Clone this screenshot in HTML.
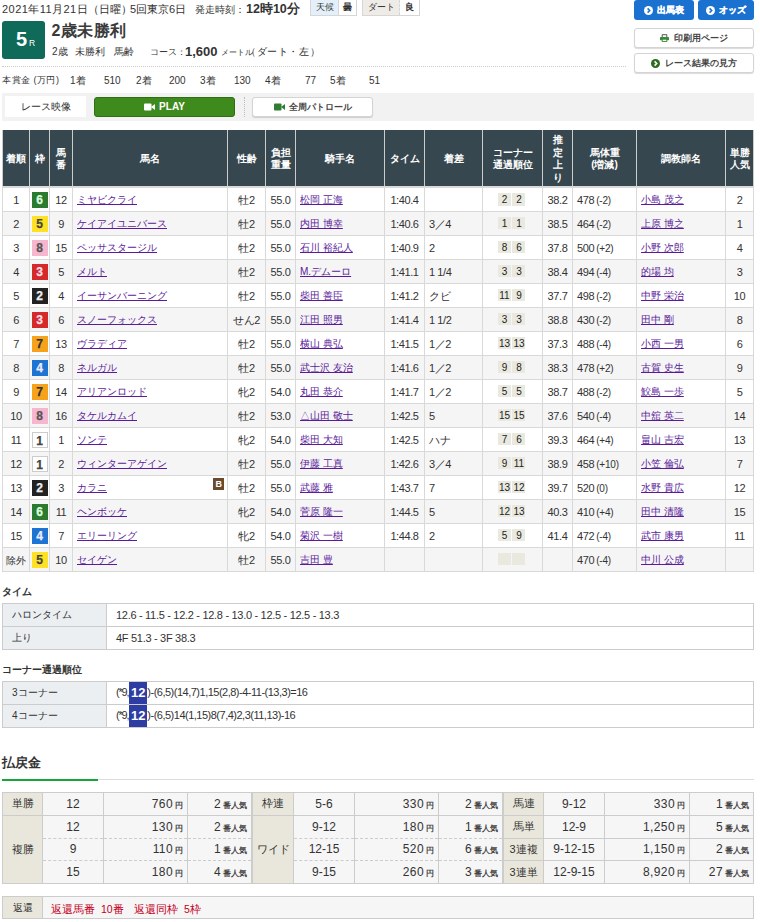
<!DOCTYPE html>
<html><head><meta charset="utf-8">
<style>
*{box-sizing:border-box;margin:0;padding:0}
html,body{width:760px;height:922px;overflow:hidden;background:#fff}
body{position:relative;font-family:"Liberation Sans",sans-serif;color:#333;font-size:11px;line-height:1}
.a{position:absolute;white-space:nowrap}
.b{font-weight:bold}
/* header */
.wx{position:absolute;top:0;height:16px;border:1px solid #d6d6d6;border-top:none;display:flex;font-size:9px}
.wx span{display:flex;align-items:center;justify-content:center;height:100%}
.rbox{position:absolute;left:2px;top:21px;width:43px;height:38px;background:#0f6a5a;border-radius:3px;color:#fff}
.btnb{position:absolute;top:0;height:20px;background:#1a71d0;border-radius:3px;color:#fff;font-weight:bold;font-size:9px;-webkit-text-stroke:0.3px #fff;display:flex;align-items:center;justify-content:center}
.btnw{position:absolute;left:634px;width:120px;height:20px;background:#fff;border:1px solid #d4d4d4;border-radius:3px;box-shadow:0 1px 1px rgba(0,0,0,.15);font-weight:bold;font-size:8.7px;display:flex;align-items:center;justify-content:center;color:#444}
.ic{display:inline-block;width:8px;height:8px;border-radius:50%;background:#fff;margin-right:4px;position:relative}
.ic:after{content:"";position:absolute;left:2px;top:2px;width:0;height:0;border-left:4px solid #1f78d1;border-top:2px solid transparent;border-bottom:2px solid transparent}
/* main table */
table{border-collapse:collapse;table-layout:fixed}
.rt{position:absolute;left:2px;top:130px;width:751px}
.rt th{background:#37474f;color:#fff;font-size:10px;font-weight:bold;height:57px;border:1px solid #ccc;border-top:none;border-bottom:2px solid #d9d9d9;line-height:1.25;padding-top:2px}
.rt td{height:24px;border:1px solid #d9d9d9;font-size:11px;text-align:center;padding-top:2px;letter-spacing:-0.4px}
.rt tr.e td{background:#f5f5f5}
.rt a{color:#5a1a9a;text-decoration:underline;font-size:10px;letter-spacing:0;position:relative;top:-0.5px}
.wk{display:inline-block;width:16px;height:16px;line-height:16px;font-weight:bold;font-size:12px;text-align:center;-webkit-text-stroke:0.25px currentColor;letter-spacing:0}
.cn{display:inline-block;width:13px;height:12.5px;line-height:13px;background:#eae9df;font-size:10px;color:#222;margin:0 0.75px;vertical-align:middle;letter-spacing:0;position:relative;left:-0.8px;top:-1px}
.rt td.nm,.rt td.jk,.rt td.tr,.rt td.df,.rt td.bw{text-align:left;padding-left:4px}
.rt td.nm{position:relative}
.bb{position:absolute;left:140px;top:2px;width:11px;height:12px;background:#6b4a2e;color:#fff;font-size:9px;font-weight:bold;line-height:12px;text-align:center}
.rt small{font-size:10px;margin-left:2px;letter-spacing:-0.2px}
.jx{font-size:10px}
.w1{background:#fff;border:1px solid #ccc;color:#444}
.w2{background:#222;color:#eee}
.w3{background:#d42a2a;color:#fde}
.w4{background:#1e74d2;color:#eef}
.w5{background:#fde124;color:#444}
.w6{background:#2b7a30;color:#dfd}
.w7{background:#f7a21b;color:#333}
.w8{background:#f6b6cd;color:#555}
.hd{font-size:10px}
.pr{top:76px;font-size:10px}
.st{position:absolute;left:2px;width:752px}
.st th{background:#eceff1;font-weight:normal;text-align:left;padding-left:9px;height:23px;border:1px solid #ccc;font-size:10px}
.st td{height:23px;border:1px solid #ccc;padding-left:9px;font-size:11px;letter-spacing:-0.3px}
.hl{display:inline-block;background:#2d3da3;color:#fff;font-weight:bold;font-size:13px;width:18px;height:22px;line-height:22px;text-align:center;vertical-align:middle;letter-spacing:0;margin-left:1px}
.pt{position:absolute;top:792px;width:250px}
.pt th{background:#e9e7dc;font-weight:normal;height:22.75px;border:1px solid #ccc;font-size:11px}
.pt td{background:#f6f6f6;height:22.75px;border:1px solid #ccc;font-size:12px}
.pt tr.d td{border-bottom:1px dashed #ccc}
.pt tr.n td{border-top:1px dashed #ccc}
.pt td.c{text-align:center}
.pt td.r{text-align:right;padding-right:4px;letter-spacing:0.4px}
.rf th{font-size:10px !important}
.rf th,.rf td{height:22px !important}
.pt u{text-decoration:none;font-size:8px;margin-left:2px;letter-spacing:0;font-weight:bold;color:#444}
</style></head><body>

<!-- header date -->
<div class="a" style="left:2px;top:4px;font-size:11px;letter-spacing:0.45px">2021年11月21日</div><div class="a" style="left:88px;top:4px;font-size:11px">（日曜）</div><div class="a" style="left:130px;top:4px;font-size:11px">5回東京6日</div>
<div class="a" style="left:195px;top:5px;font-size:10px">発走時刻：</div><div class="a b" style="left:246px;top:3px;font-size:12.5px">12時10分</div>
<div class="wx" style="left:310px;width:47px"><span style="width:28px;background:#e3f0fa;border-right:1px solid #d6d6d6">天候</span><span style="flex:1;font-weight:bold">曇</span></div>
<div class="wx" style="left:362px;width:58px"><span style="width:37px;background:#efebe7;border-right:1px dashed #d6d6d6">ダート</span><span style="flex:1;font-weight:bold">良</span></div>

<div class="rbox"><span class="a b" style="left:14px;top:8px;font-size:20px">5</span><span class="a" style="left:27px;top:18px;font-size:8.5px">R</span></div>
<div class="a b" style="left:51.5px;top:23px;font-size:16px;color:#3a3a3a;letter-spacing:0.4px">2歳未勝利</div>
<div class="a" style="left:52px;top:47px;font-size:10px">2歳</div>
<div class="a" style="left:75px;top:47px;font-size:10px">未勝利</div>
<div class="a" style="left:114px;top:47px;font-size:10px">馬齢</div>
<div class="a" style="left:150px;top:48px;font-size:9px">コース</div>
<div class="a" style="left:177px;top:48px;font-size:9px">：</div>
<div class="a b" style="left:185px;top:45px;font-size:13px">1,600</div>
<div class="a" style="left:221px;top:49px;font-size:8px">メートル</div>
<div class="a" style="left:246px;top:47px;font-size:10px;letter-spacing:0.6px">（ダート・左）</div>
<div class="a" style="left:2px;top:66px;width:624px;border-top:1px dotted #ccc"></div>
<div class="a pr" style="left:2px;font-size:9px;top:76px;letter-spacing:0.5px">本賞金 (万円)</div>
<div class="a pr" style="left:70px">1着</div><div class="a pr" style="left:104px">510</div>
<div class="a pr" style="left:136px">2着</div><div class="a pr" style="left:169px">200</div>
<div class="a pr" style="left:200px">3着</div><div class="a pr" style="left:234px">130</div>
<div class="a pr" style="left:265px">4着</div><div class="a pr" style="left:305px">77</div>
<div class="a pr" style="left:330px">5着</div><div class="a pr" style="left:369px">51</div>

<div class="btnb" style="left:634px;width:60px"><svg width="9" height="9" viewBox="0 0 9 9" style="margin-right:4px;vertical-align:middle"><circle cx="4.5" cy="4.5" r="4.5" fill="#fff"/><path d="M3.6 2.4L5.7 4.5L3.6 6.6" stroke="#1a73d1" stroke-width="1.6" fill="none"/></svg>出馬表</div>
<div class="btnb" style="left:698px;width:56px"><svg width="9" height="9" viewBox="0 0 9 9" style="margin-right:4px;vertical-align:middle"><circle cx="4.5" cy="4.5" r="4.5" fill="#fff"/><path d="M3.6 2.4L5.7 4.5L3.6 6.6" stroke="#1a73d1" stroke-width="1.6" fill="none"/></svg>オッズ</div>
<div class="btnw" style="top:28px"><svg width="9" height="8" viewBox="0 0 9 8" style="margin-right:5px;vertical-align:middle"><path d="M2.2 3V0.7H6.8V3" fill="none" stroke="#555" stroke-width="1"/><rect x="0" y="3" width="9" height="3.2" rx="0.6" fill="#3a8a3a"/><rect x="2.2" y="5.2" width="4.6" height="2.3" fill="#fff" stroke="#3a8a3a" stroke-width="0.9"/></svg>印刷用ページ</div>
<div class="btnw" style="top:53px"><svg width="9" height="9" viewBox="0 0 9 9" style="margin-right:5px;vertical-align:middle"><circle cx="4.5" cy="4.5" r="4.5" fill="#2e6b1e"/><path d="M3.6 2.4L5.7 4.5L3.6 6.6" stroke="#fff" stroke-width="1.6" fill="none"/></svg>レース結果の見方</div>

<!-- video bar -->
<div class="a" style="left:2px;top:93px;width:752px;height:28px;background:#f2f2f2"></div>
<div class="a" style="left:5px;top:96px;width:81px;height:21px;background:#fff;font-size:10px;display:flex;align-items:center;justify-content:center">レース映像</div>
<div class="a b" style="left:94px;top:97px;width:141px;height:20px;background:#3f8a1c;border:1px solid #2f6e12;border-radius:3px;color:#fff;font-size:10px;display:flex;align-items:center;justify-content:center;padding-left:0px"><svg width="11" height="8" viewBox="0 0 11 8" style="margin-right:4px;vertical-align:middle"><rect x="0" y="0.5" width="7.5" height="7" rx="1" fill="#fff"/><path d="M7 4L11 1V7Z" fill="#fff"/></svg>PLAY</div>
<div class="a" style="left:244px;top:97px;height:20px;border-left:1px dotted #bbb"></div>
<div class="btnw" style="left:252px;top:97px;width:121px"><svg width="11" height="8" viewBox="0 0 11 8" style="margin-right:4px;vertical-align:middle"><rect x="0" y="0.5" width="7.5" height="7" rx="1" fill="#2e7d32"/><path d="M7 4L11 1V7Z" fill="#2e7d32"/></svg>全周パトロール</div>


<!-- main table -->
<table class="rt">
<colgroup><col style="width:27px"><col style="width:20px"><col style="width:23px"><col style="width:155px"><col style="width:38px"><col style="width:30px"><col style="width:89px"><col style="width:40px"><col style="width:58px"><col style="width:60px"><col style="width:30px"><col style="width:64px"><col style="width:89px"><col style="width:28px"></colgroup>
<tr><th>着順</th><th>枠</th><th>馬<br>番</th><th>馬名</th><th>性齢</th><th>負担<br>重量</th><th>騎手名</th><th>タイム</th><th>着差</th><th>コーナー<br>通過順位</th><th>推<br>定<br>上<br>り</th><th>馬体重<br>(増減)</th><th>調教師名</th><th>単勝<br>人気</th></tr>
<tr><td>1</td><td><span class="wk w6">6</span></td><td>12</td><td class="nm"><a>ミヤビクライ</a></td><td>牡2</td><td>55.0</td><td class="jk"><a>松岡 正海</a></td><td>1:40.4</td><td class="df"></td><td><span class="cn">2</span><span class="cn">2</span></td><td>38.2</td><td class="bw">478<small>(-2)</small></td><td class="tr"><a>小島 茂之</a></td><td>2</td></tr>
<tr class="e"><td>2</td><td><span class="wk w5">5</span></td><td>9</td><td class="nm"><a>ケイアイユニバース</a></td><td>牡2</td><td>55.0</td><td class="jk"><a>内田 博幸</a></td><td>1:40.6</td><td class="df">3／4</td><td><span class="cn">1</span><span class="cn">1</span></td><td>38.5</td><td class="bw">464<small>(-2)</small></td><td class="tr"><a>上原 博之</a></td><td>1</td></tr>
<tr><td>3</td><td><span class="wk w8">8</span></td><td>15</td><td class="nm"><a>ペッサスタージル</a></td><td>牡2</td><td>55.0</td><td class="jk"><a>石川 裕紀人</a></td><td>1:40.9</td><td class="df">2</td><td><span class="cn">8</span><span class="cn">6</span></td><td>37.8</td><td class="bw">500<small>(+2)</small></td><td class="tr"><a>小野 次郎</a></td><td>4</td></tr>
<tr class="e"><td>4</td><td><span class="wk w3">3</span></td><td>5</td><td class="nm"><a>メルト</a></td><td>牡2</td><td>55.0</td><td class="jk"><a>M.デムーロ</a></td><td>1:41.1</td><td class="df">1 1/4</td><td><span class="cn">3</span><span class="cn">3</span></td><td>38.4</td><td class="bw">494<small>(-4)</small></td><td class="tr"><a>的場 均</a></td><td>3</td></tr>
<tr><td>5</td><td><span class="wk w2">2</span></td><td>4</td><td class="nm"><a>イーサンバーニング</a></td><td>牡2</td><td>55.0</td><td class="jk"><a>柴田 善臣</a></td><td>1:41.2</td><td class="df">クビ</td><td><span class="cn">11</span><span class="cn">9</span></td><td>37.7</td><td class="bw">498<small>(-2)</small></td><td class="tr"><a>中野 栄治</a></td><td>10</td></tr>
<tr class="e"><td>6</td><td><span class="wk w3">3</span></td><td>6</td><td class="nm"><a>スノーフォックス</a></td><td>せん2</td><td>55.0</td><td class="jk"><a>江田 照男</a></td><td>1:41.4</td><td class="df">1 1/2</td><td><span class="cn">3</span><span class="cn">3</span></td><td>38.8</td><td class="bw">430<small>(-2)</small></td><td class="tr"><a>田中 剛</a></td><td>8</td></tr>
<tr><td>7</td><td><span class="wk w7">7</span></td><td>13</td><td class="nm"><a>ヴラディア</a></td><td>牡2</td><td>55.0</td><td class="jk"><a>横山 典弘</a></td><td>1:41.5</td><td class="df">1／2</td><td><span class="cn">13</span><span class="cn">13</span></td><td>37.3</td><td class="bw">488<small>(-4)</small></td><td class="tr"><a>小西 一男</a></td><td>6</td></tr>
<tr class="e"><td>8</td><td><span class="wk w4">4</span></td><td>8</td><td class="nm"><a>ネルガル</a></td><td>牡2</td><td>55.0</td><td class="jk"><a>武士沢 友治</a></td><td>1:41.6</td><td class="df">1／2</td><td><span class="cn">9</span><span class="cn">8</span></td><td>38.3</td><td class="bw">478<small>(+2)</small></td><td class="tr"><a>古賀 史生</a></td><td>9</td></tr>
<tr><td>9</td><td><span class="wk w7">7</span></td><td>14</td><td class="nm"><a>アリアンロッド</a></td><td>牝2</td><td>54.0</td><td class="jk"><a>丸田 恭介</a></td><td>1:41.7</td><td class="df">1／2</td><td><span class="cn">5</span><span class="cn">5</span></td><td>38.7</td><td class="bw">488<small>(-2)</small></td><td class="tr"><a>鮫島 一歩</a></td><td>5</td></tr>
<tr class="e"><td>10</td><td><span class="wk w8">8</span></td><td>16</td><td class="nm"><a>タケルカムイ</a></td><td>牡2</td><td>53.0</td><td class="jk"><a>△山田 敬士</a></td><td>1:42.5</td><td class="df">5</td><td><span class="cn">15</span><span class="cn">15</span></td><td>37.6</td><td class="bw">540<small>(-4)</small></td><td class="tr"><a>中舘 英二</a></td><td>14</td></tr>
<tr><td>11</td><td><span class="wk w1">1</span></td><td>1</td><td class="nm"><a>ソンテ</a></td><td>牝2</td><td>54.0</td><td class="jk"><a>柴田 大知</a></td><td>1:42.5</td><td class="df">ハナ</td><td><span class="cn">7</span><span class="cn">6</span></td><td>39.3</td><td class="bw">464<small>(+4)</small></td><td class="tr"><a>畠山 吉宏</a></td><td>13</td></tr>
<tr class="e"><td>12</td><td><span class="wk w1">1</span></td><td>2</td><td class="nm"><a>ウィンターアゲイン</a></td><td>牡2</td><td>55.0</td><td class="jk"><a>伊藤 工真</a></td><td>1:42.6</td><td class="df">3／4</td><td><span class="cn">9</span><span class="cn">11</span></td><td>38.9</td><td class="bw">458<small>(+10)</small></td><td class="tr"><a>小笠 倫弘</a></td><td>7</td></tr>
<tr><td>13</td><td><span class="wk w2">2</span></td><td>3</td><td class="nm"><a>カラニ</a><span class="bb">B</span></td><td>牡2</td><td>55.0</td><td class="jk"><a>武藤 雅</a></td><td>1:43.7</td><td class="df">7</td><td><span class="cn">13</span><span class="cn">12</span></td><td>39.7</td><td class="bw">520<small>(0)</small></td><td class="tr"><a>水野 貴広</a></td><td>12</td></tr>
<tr class="e"><td>14</td><td><span class="wk w6">6</span></td><td>11</td><td class="nm"><a>ヘンボッケ</a></td><td>牝2</td><td>54.0</td><td class="jk"><a>菅原 隆一</a></td><td>1:44.5</td><td class="df">5</td><td><span class="cn">12</span><span class="cn">13</span></td><td>40.3</td><td class="bw">410<small>(+4)</small></td><td class="tr"><a>田中 清隆</a></td><td>15</td></tr>
<tr><td>15</td><td><span class="wk w4">4</span></td><td>7</td><td class="nm"><a>エリーリング</a></td><td>牝2</td><td>54.0</td><td class="jk"><a>菊沢 一樹</a></td><td>1:44.8</td><td class="df">2</td><td><span class="cn">5</span><span class="cn">9</span></td><td>41.4</td><td class="bw">472<small>(-4)</small></td><td class="tr"><a>武市 康男</a></td><td>11</td></tr>
<tr class="e"><td><span class="jx">除外</span></td><td><span class="wk w5">5</span></td><td>10</td><td class="nm"><a>セイゲン</a></td><td>牡2</td><td>55.0</td><td class="jk"><a>吉田 豊</a></td><td></td><td class="df"></td><td><span class="cn"></span><span class="cn"></span></td><td></td><td class="bw">470<small>(-4)</small></td><td class="tr"><a>中川 公成</a></td><td></td></tr>

</table>

<!-- time -->
<div class="a b hd" style="left:2px;top:587px">タイム</div>
<table class="st" style="top:603px">
<colgroup><col style="width:104px"><col></colgroup>
<tr><th>ハロンタイム</th><td>12.6 - 11.5 - 12.2 - 12.8 - 13.0 - 12.5 - 12.5 - 13.3</td></tr>
<tr><th>上り</th><td>4F 51.3 - 3F 38.3</td></tr>
</table>
<div class="a b hd" style="left:2px;top:665px">コーナー通過順位</div>
<table class="st" style="top:681px">
<colgroup><col style="width:104px"><col></colgroup>
<tr><th>3コーナー</th><td style="letter-spacing:-0.5px"><span style="letter-spacing:-1.2px">(*9,</span><span class="hl">12</span>)-(6,5)(14,7)1,15(2,8)-4-11-(13,3)=16</td></tr>
<tr><th>4コーナー</th><td style="letter-spacing:-0.5px"><span style="letter-spacing:-1.2px">(*9,</span><span class="hl">12</span>)-(6,5)14(1,15)8(7,4)2,3(11,13)-16</td></tr>
</table>

<!-- payout -->
<div class="a b" style="left:2px;top:756px;font-size:13px">払戻金</div>
<div class="a" style="left:2px;top:779px;width:752px;border-top:1px solid #ddd"></div>
<div class="a" style="left:2px;top:779px;width:96px;border-top:2px solid #15a63a"></div>

<table class="pt" style="left:2px">
<colgroup><col style="width:40px"><col style="width:61px"><col style="width:84px"><col style="width:64px"></colgroup>
<tr><th>単勝</th><td class="c">12</td><td class="r">760<u>円</u></td><td class="r">2<u>番人気</u></td></tr>
<tr class="d"><th rowspan="3">複勝</th><td class="c">12</td><td class="r">130<u>円</u></td><td class="r">2<u>番人気</u></td></tr>
<tr class="d n"><td class="c">9</td><td class="r">110<u>円</u></td><td class="r">1<u>番人気</u></td></tr>
<tr class="n"><td class="c">15</td><td class="r">180<u>円</u></td><td class="r">4<u>番人気</u></td></tr>
</table>
<table class="pt" style="left:252px">
<colgroup><col style="width:41px"><col style="width:61px"><col style="width:84px"><col style="width:64px"></colgroup>
<tr><th>枠連</th><td class="c">5-6</td><td class="r">330<u>円</u></td><td class="r">2<u>番人気</u></td></tr>
<tr class="d"><th rowspan="3">ワイド</th><td class="c">9-12</td><td class="r">180<u>円</u></td><td class="r">1<u>番人気</u></td></tr>
<tr class="d n"><td class="c">12-15</td><td class="r">520<u>円</u></td><td class="r">6<u>番人気</u></td></tr>
<tr class="n"><td class="c">9-15</td><td class="r">260<u>円</u></td><td class="r">3<u>番人気</u></td></tr>
</table>
<table class="pt" style="left:503px">
<colgroup><col style="width:40px"><col style="width:61px"><col style="width:85px"><col style="width:64px"></colgroup>
<tr><th>馬連</th><td class="c">9-12</td><td class="r">330<u>円</u></td><td class="r">1<u>番人気</u></td></tr>
<tr><th>馬単</th><td class="c">12-9</td><td class="r">1,250<u>円</u></td><td class="r">5<u>番人気</u></td></tr>
<tr><th>3連複</th><td class="c">9-12-15</td><td class="r">1,150<u>円</u></td><td class="r">2<u>番人気</u></td></tr>
<tr><th>3連単</th><td class="c">12-9-15</td><td class="r">8,920<u>円</u></td><td class="r">27<u>番人気</u></td></tr>
</table>

<table class="pt rf" style="left:2px;top:896px;width:752px">
<colgroup><col style="width:40px"><col></colgroup>
<tr><th>返還</th><td style="color:#c4001c;padding-left:8px;font-size:10.5px;position:relative"><span class="a" style="left:8px;top:7px">返還馬番</span><span class="a" style="left:58px;top:7px">10番</span><span class="a" style="left:91px;top:7px">返還同枠</span><span class="a" style="left:141px;top:7px">5枠</span></td></tr>
</table>
</body></html>
